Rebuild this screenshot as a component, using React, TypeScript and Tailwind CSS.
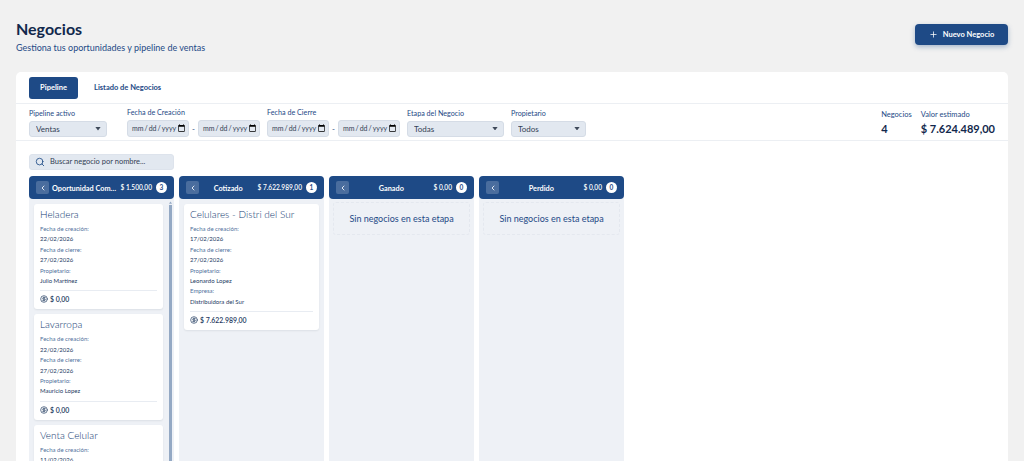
import { Plus, Search, ChevronLeft, CircleDollarSign } from "lucide-react";

function DateInput() {
  return (
    <input
      type="date"
      className="h-[17px] w-[62px] rounded-[3px] border border-[#d5dce6] bg-[#e2e8f0] pl-[3px] pr-[2px] text-[7px] leading-none text-[#334155] [&::-webkit-calendar-picker-indicator]:m-0 [&::-webkit-calendar-picker-indicator]:h-[9px] [&::-webkit-calendar-picker-indicator]:w-[9px] [&::-webkit-calendar-picker-indicator]:p-0"
    />
  );
}

function Sel({ w, v }: { w: string; v: string }) {
  return (
    <div className={`relative h-[16px] ${w}`}>
      <select
        defaultValue={v}
        className="block h-[16px] w-full appearance-none rounded-[3px] border border-[#d5dce6] bg-[#e2e8f0] pl-[6px] text-[8px] text-[#334155]"
      >
        <option>{v}</option>
      </select>
      <svg viewBox="0 0 6 4" className="pointer-events-none absolute right-[6px] top-[6px] h-[3.5px] w-[6px]">
        <path d="M0 0h6L3 4z" fill="#3f4a5a" />
      </svg>
    </div>
  );
}

function Field({ label, children }: { label: string; children: React.ReactNode }) {
  return (
    <div className="flex flex-col gap-[2px]">
      <span className="text-[7.2px] leading-[10px] text-[#1e4a86]">{label}</span>
      <div className="flex items-center gap-[3px]">{children}</div>
    </div>
  );
}

function Head({ t, a, n, center = true }: { t: string; a: string; n: number; center?: boolean }) {
  return (
    <div className="flex h-[23px] items-center rounded-[4px] bg-[#1e4a86] pl-[7px] pr-[7px] text-white">
      <span className="flex h-[13px] w-[13px] shrink-0 items-center justify-center rounded-[2px] bg-[#4a6d9e]">
        <ChevronLeft size={8} strokeWidth={2.5} />
      </span>
      <span className={`min-w-0 flex-1 truncate pl-[3px] pt-[1px] text-[7.3px] font-bold leading-[11px] ${center ? "text-center" : ""}`}>{t}</span>
      <span className="ml-[3px] shrink-0 text-[6.6px] font-semibold">{a}</span>
      <span className="ml-[4px] flex h-[11px] w-[11px] shrink-0 items-center justify-center rounded-full bg-white text-[6.5px] font-bold text-[#1e4a86]">
        {n}
      </span>
    </div>
  );
}

function Row({ l, v }: { l: string; v: string }) {
  return (
    <>
      <div className="text-[6px] leading-[10.4px] text-[#4f6f9c]">{l}</div>
      <div className="text-[6px] leading-[10.4px] text-[#1e3a5f]">{v}</div>
    </>
  );
}

function Card({ t, rows, amount }: { t: string; rows: [string, string][]; amount?: string }) {
  return (
    <div className="rounded-[3px] bg-white px-[6px] pb-[5px] pt-[4px] shadow-[0_1px_2px_rgba(15,23,42,0.08)]">
      <div className="mb-[3px] text-[10px] font-light leading-[13px] text-[#123a72]">{t}</div>
      <div className="flex flex-col">
        {rows.map(([l, v]) => (
          <Row key={l} l={l} v={v} />
        ))}
      </div>
      {amount && (
        <div className="mt-[4px] flex items-center gap-[2px] border-t border-[#e8ecf2] pt-[3px] text-[6.9px] font-semibold leading-[10px] text-[#1e3a5f]">
          <CircleDollarSign size={8} />
          <span>{amount}</span>
        </div>
      )}
    </div>
  );
}

function Empty() {
  return (
    <div className="mx-[4px] mt-[3px] flex h-[33px] items-center justify-center rounded-[3px] border border-dashed border-[#e4e8ef] text-[9px] text-[#1e4a86]">
      Sin negocios en esta etapa
    </div>
  );
}

export default function App() {
  return (
    <div
      className="h-[461px] w-[1024px] overflow-hidden bg-[#f1f1f1] px-[16px] pt-[19px]"
      style={{ fontFamily: "Lato, 'Noto Sans', sans-serif" }}
    >
      <div className="flex items-start justify-between">
        <div>
          <h1 className="text-[16px] font-bold leading-[20px] text-[#12284c]">Negocios</h1>
          <p className="mt-[3px] text-[9px] leading-[12px] text-[#1e4a86]">Gestiona tus oportunidades y pipeline de ventas</p>
        </div>
        <button className="mt-[5px] flex h-[21px] w-[93px] items-center justify-center gap-[5px] rounded-[4px] bg-[#1e4a86] text-[7.5px] font-bold text-white shadow-[0_2px_5px_rgba(30,74,134,0.35)]">
          <Plus size={9} />
          Nuevo Negocio
        </button>
      </div>

      <div className="mt-[18px] h-[400px] rounded-t-[5px] bg-white">
        <div className="flex h-[32px] items-center gap-[16px] border-b border-[#eceff3] pl-[13px]">
          <span className="flex h-[22px] w-[49px] items-center justify-center rounded-[3px] bg-[#1e4a86] text-[7.5px] font-bold text-white">
            Pipeline
          </span>
          <span className="text-[7.5px] font-bold text-[#1e4a86]">Listado de Negocios</span>
        </div>

        <div className="flex h-[37px] items-center border-b border-[#eceff3] pl-[13px] pr-[13px] pt-[1px]">
          <div className="flex items-start gap-[20px]">
            <div className="pt-[1px]">
              <Field label="Pipeline activo">
                <Sel w="w-[78px]" v="Ventas" />
              </Field>
            </div>
            <div className="flex items-start gap-[7px]">
              <Field label="Fecha de Creación">
                <DateInput />
                <span className="w-[3px] text-center text-[8px] text-[#1e4a86]">-</span>
                <DateInput />
              </Field>
              <Field label="Fecha de Cierre">
                <DateInput />
                <span className="w-[3px] text-center text-[8px] text-[#1e4a86]">-</span>
                <DateInput />
              </Field>
            </div>
          </div>
          <div className="ml-[7px] flex items-start gap-[7px]">
            <Field label="Etapa del Negocio">
              <Sel w="w-[97px]" v="Todas" />
            </Field>
            <Field label="Propietario">
              <Sel w="w-[75px]" v="Todos" />
            </Field>
          </div>
          <div className="ml-auto flex gap-[9px]">
            <div>
              <div className="text-[7.5px] leading-[10px] text-[#1e4a86]">Negocios</div>
              <div className="mt-[2px] text-[11px] font-bold leading-[14px] text-[#12284c]">4</div>
            </div>
            <div>
              <div className="text-[7.5px] leading-[10px] text-[#1e4a86]">Valor estimado</div>
              <div className="mt-[2px] text-[11px] font-bold leading-[14px] text-[#12284c]">$ 7.624.489,00</div>
            </div>
          </div>
        </div>

        <div className="pl-[13px] pt-[13px]">
          <div className="flex h-[16px] w-[145px] items-center gap-[5px] rounded-[3px] border border-[#dde3ec] bg-[#e2e8f0] pl-[5px] text-[7.5px] text-[#334155]">
            <Search size={10} className="text-[#1e4a86]" />
            Buscar negocio por nombre...
          </div>

          <div className="mt-[6px] flex gap-[5px]">
            <div className="h-[300px] w-[145px] shrink-0 rounded-t-[4px] bg-[#eef1f6]">
              <Head t="Oportunidad Comercial" a="$ 1.500,00" n={3} center={false} />
              <div className="relative flex flex-col gap-[5px] pl-[5px] pr-[11px] pt-[5px]">
                <Card t="Heladera" amount="$ 0,00" rows={[["Fecha de creación:", "22/02/2026"], ["Fecha de cierre:", "27/02/2026"], ["Propietario:", "Julio Martínez"]]} />
                <Card t="Lavarropa" amount="$ 0,00" rows={[["Fecha de creación:", "22/02/2026"], ["Fecha de cierre:", "27/02/2026"], ["Propietario:", "Mauricio Lopez"]]} />
                <Card t="Venta Celular" rows={[["Fecha de creación:", "11/02/2026"]]} />
                <svg viewBox="0 0 4 3" className="absolute right-[2px] top-[2px] h-[3px] w-[3px]">
                  <path d="M0 3L2 0l2 3z" fill="#94a9c4" />
                </svg>
                <div className="absolute right-[2px] top-[6px] h-[280px] w-[3px] bg-[#94a9c4]" />
              </div>
            </div>
            <div className="h-[300px] w-[145px] shrink-0 rounded-t-[4px] bg-[#eef1f6]">
              <Head t="Cotizado" a="$ 7.622.989,00" n={1} />
              <div className="px-[5px] pt-[5px]">
                <Card t="Celulares - Distri del Sur" amount="$ 7.622.989,00" rows={[["Fecha de creación:", "17/02/2026"], ["Fecha de cierre:", "27/02/2026"], ["Propietario:", "Leonardo Lopez"], ["Empresa:", "Distribuidora del Sur"]]} />
              </div>
            </div>
            <div className="h-[300px] w-[145px] shrink-0 rounded-t-[4px] bg-[#eef1f6]">
              <Head t="Ganado" a="$ 0,00" n={0} />
              <Empty />
            </div>
            <div className="h-[300px] w-[145px] shrink-0 rounded-t-[4px] bg-[#eef1f6]">
              <Head t="Perdido" a="$ 0,00" n={0} />
              <Empty />
            </div>
          </div>
        </div>
      </div>
    </div>
  );
}
